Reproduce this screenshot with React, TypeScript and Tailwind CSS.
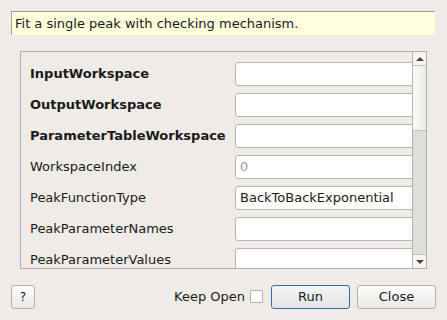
import React from "react";

const rows: { label: string; bold?: boolean; value?: string; placeholder?: string }[] = [
  { label: "InputWorkspace", bold: true },
  { label: "OutputWorkspace", bold: true },
  { label: "ParameterTableWorkspace", bold: true },
  { label: "WorkspaceIndex", placeholder: "0" },
  { label: "PeakFunctionType", value: "BackToBackExponential" },
  { label: "PeakParameterNames" },
  { label: "PeakParameterValues" },
];

export default function App() {
  return (
    <div
      className="w-[447px] h-[320px] bg-[#efebe7] text-[#1a1a1a] relative overflow-hidden"
      style={{ fontFamily: '"DejaVu Sans", sans-serif' }}
    >
      <div className="pt-[11px] pl-[11px] pr-[12px]">
        <div className="h-[24px] bg-[#ffffdc] border-t border-l border-[#a0a0a0] flex items-center pl-[3px] text-[13px]">
          Fit a single peak with checking mechanism.
        </div>
      </div>
      <div className="mt-[16px] ml-[20px] w-[407px] h-[218px] border border-[#b4b0ab] flex">
        <div className="flex-1 overflow-hidden">
          <div className="flex flex-col gap-[7px] pt-[10px]">
            {rows.map((r) => (
              <div key={r.label} className="flex items-center h-[24px]">
                <div className={`w-[214px] shrink-0 pl-[9px] text-[13px] whitespace-nowrap ${r.bold ? "font-bold" : ""}`}>{r.label}</div>
                <div className="h-[24px] w-[200px] shrink-0 bg-white border border-[#b8b4b0] rounded-[3px] flex items-center pl-[4px] text-[13px]">
                  {r.value ? <span>{r.value}</span> : r.placeholder ? <span className="text-[#9a9a9a]">{r.placeholder}</span> : null}
                </div>
              </div>
            ))}
          </div>
        </div>
        <div className="w-[14px] border-l border-[#b4b0ab] bg-[#e0dedb] flex flex-col">
          <div className="h-[14px] bg-[#f6f5f4] border-b border-[#c4c0bb] flex items-center justify-center">
            <div className="w-0 h-0 border-l-[4px] border-r-[4px] border-b-[4px] border-l-transparent border-r-transparent border-b-[#444]" />
          </div>
          <div className="h-[65px] bg-gradient-to-r from-[#fbfbfb] to-[#eceae8] border-b border-[#c4c0bb]" />
          <div className="flex-1" />
          <div className="h-[14px] bg-[#f6f5f4] border-t border-[#c4c0bb] flex items-center justify-center">
            <div className="w-0 h-0 border-l-[4px] border-r-[4px] border-t-[4px] border-l-transparent border-r-transparent border-t-[#444]" />
          </div>
        </div>
      </div>
      <div className="mt-[15px] flex items-center pl-[11px] pr-[11px] h-[25px]">
        <button className="w-[24px] h-[24px] border border-[#b4b0ab] rounded-[3px] bg-gradient-to-b from-[#fbfbfa] to-[#eceae8] text-[12px] flex items-center justify-center">
          ?
        </button>
        <div className="flex-1" />
        <span className="text-[13px] mr-[5px]">Keep Open</span>
        <div className="w-[13px] h-[13px] bg-white border border-[#b4b0ab] rounded-[1px] mr-[8px]" />
        <button className="w-[79px] h-[24px] border border-[#2f6fa4] rounded-[3px] bg-gradient-to-b from-[#f3f4f5] to-[#e1e5e8] text-[13px] flex items-center justify-center mr-[7px]">
          Run
        </button>
        <button className="w-[79px] h-[24px] border border-[#b4b0ab] rounded-[3px] bg-gradient-to-b from-[#fbfbfa] to-[#eceae8] text-[13px] flex items-center justify-center">
          Close
        </button>
      </div>
    </div>
  );
}
